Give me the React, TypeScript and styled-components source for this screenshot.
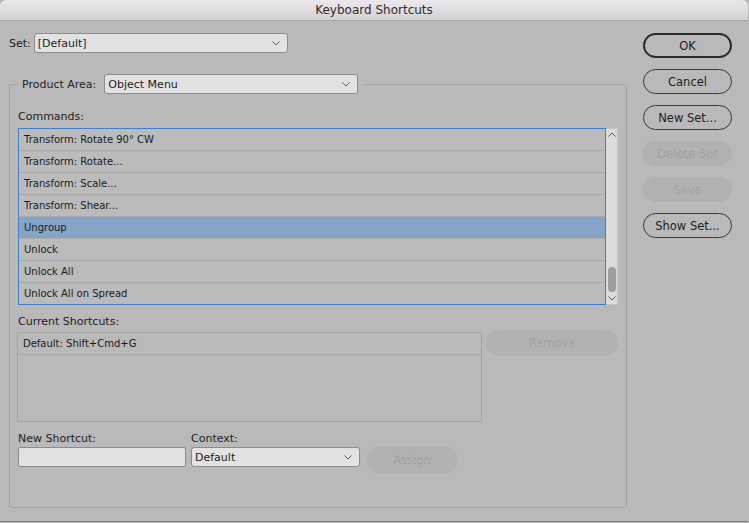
import styled, { createGlobalStyle } from 'styled-components';

const GlobalStyle = createGlobalStyle`
    html, body {
        margin: 0;
        padding: 0;
        background: #b9b9b9;
    }
    body {
        font-family: 'DejaVu Sans', 'Liberation Sans', sans-serif;
        color: #1e1e1e;
    }
`;

const COMMANDS = [
    'Transform: Rotate 90° CW',
    'Transform: Rotate...',
    'Transform: Scale...',
    'Transform: Shear...',
    'Ungroup',
    'Unlock',
    'Unlock All',
    'Unlock All on Spread',
];

const SELECTED = 'Ungroup';

const Chevron = ({ up = false }: { up?: boolean }) => (
    <svg width="8" height="5" viewBox="0 0 8 5">
        <path
            d={up ? 'M0.5 4.5 L4 1 L7.5 4.5' : 'M0.5 0.5 L4 4 L7.5 0.5'}
            fill="none"
            stroke="#5a5a5a"
            strokeWidth="1"
        />
    </svg>
);

const Select = ({ value, width }: { value: string; width: number }) => (
    <SelectBox $width={width}>
        <span>{value}</span>
        <Chevron />
    </SelectBox>
);

const App = () => {
    return (
        <>
            <GlobalStyle />
            <Window>
                <TitleBar>Keyboard Shortcuts</TitleBar>
                <Body>
                    <LeftCol>
                        <SetRow>
                            <Label>Set:</Label>
                            <Select value="[Default]" width={254} />
                        </SetRow>

                        <Group>
                            <Legend>
                                <Label>Product Area:</Label>
                                <Select value="Object Menu" width={254} />
                            </Legend>

                            <SectionLabel $top={16}>Commands:</SectionLabel>
                            <ListWrap>
                                <List>
                                    {COMMANDS.map((c) => (
                                        <Row key={c} $selected={c === SELECTED}>
                                            {c}
                                        </Row>
                                    ))}
                                </List>
                                <Scrollbar>
                                    <Chevron up />
                                    <Thumb />
                                    <Chevron />
                                </Scrollbar>
                            </ListWrap>

                            <SectionLabel $top={10}>Current Shortcuts:</SectionLabel>
                            <ShortcutRow>
                                <ShortcutBox>
                                    <Row>Default: Shift+Cmd+G</Row>
                                </ShortcutBox>
                                <Pill $disabled $width={132}>
                                    Remove
                                </Pill>
                            </ShortcutRow>

                            <AssignRow>
                                <Field>
                                    <SectionLabel $top={0}>New Shortcut:</SectionLabel>
                                    <Input />
                                </Field>
                                <Field>
                                    <SectionLabel $top={0}>Context:</SectionLabel>
                                    <Select value="Default" width={169} />
                                </Field>
                                <AssignSlot>
                                    <Pill $disabled $width={90}>
                                        Assign
                                    </Pill>
                                </AssignSlot>
                            </AssignRow>
                        </Group>
                    </LeftCol>

                    <RightCol>
                        <Pill $default>OK</Pill>
                        <Pill>Cancel</Pill>
                        <Pill>New Set...</Pill>
                        <Pill $disabled>Delete Set</Pill>
                        <Pill $disabled>Save</Pill>
                        <Pill>Show Set...</Pill>
                    </RightCol>
                </Body>
            </Window>
        </>
    );
};

const Window = styled.div`
    width: 748px;
    height: 521px;
    border-bottom: 1px solid #7c7c7c;
    border-top-right-radius: 6px;
    border-top-left-radius: 6px;
    overflow: hidden;
    background: #b9b9b9;
    display: flex;
    flex-direction: column;
`;

const TitleBar = styled.div`
    height: 21px;
    flex-shrink: 0;
    box-sizing: border-box;
    border-bottom: 1px solid #a3a3a3;
    background: linear-gradient(#ebe9eb, #d3d1d3);
    display: flex;
    align-items: center;
    justify-content: center;
    font-size: 12px;
    color: #2e2e2e;
`;

const Body = styled.div`
    display: flex;
    padding: 12px 0 0 9px;
    gap: 16px;
`;

const LeftCol = styled.div`
    width: 618px;
    display: flex;
    flex-direction: column;
`;

const RightCol = styled.div`
    display: flex;
    flex-direction: column;
    gap: 11px;
`;

const SetRow = styled.div`
    display: flex;
    align-items: center;
    gap: 3px;
    height: 20px;
`;

const Label = styled.span`
    font-size: 11px;
    white-space: nowrap;
`;

const SelectBox = styled.div<{ $width: number }>`
    width: ${(p) => p.$width}px;
    height: 20px;
    box-sizing: border-box;
    border: 1px solid #8c8c8c;
    border-radius: 3px;
    background: #e2e2e2;
    display: flex;
    align-items: center;
    justify-content: space-between;
    padding: 0 7px 0 3px;
    font-size: 11px;
    color: #1e1e1e;
`;

const Group = styled.fieldset`
    margin: 21px 0 0;
    padding: 0 8px 8px;
    height: 434px;
    box-sizing: border-box;
    border: 1px solid #a4a4a4;
    border-radius: 3px;
    min-width: 0;
`;

const Legend = styled.legend`
    display: flex;
    align-items: center;
    gap: 8px;
    padding: 0 4px;
    margin-left: 0;
`;

const SectionLabel = styled.div<{ $top: number }>`
    font-size: 11px;
    margin-top: ${(p) => p.$top}px;
    height: 14px;
    line-height: 14px;
    margin-bottom: 4px;
    white-space: nowrap;
`;

const ListWrap = styled.div`
    display: flex;
    height: 177px;
`;

const List = styled.div`
    flex: 1;
    box-sizing: border-box;
    border: 1px solid #3f7fd3;
    overflow: hidden;
    background: #bbbbbb;
`;

const Row = styled.div<{ $selected?: boolean }>`
    height: 22px;
    box-sizing: border-box;
    border-bottom: 1px solid #a9a9a9;
    padding-left: 5px;
    display: flex;
    align-items: center;
    font-size: 10px;
    color: #1a1a1a;
    background: ${(p) => (p.$selected ? '#86a4c8' : 'transparent')};
    white-space: nowrap;
`;

const Scrollbar = styled.div`
    width: 12px;
    box-sizing: border-box;
    background: #dcdcdc;
    border: 1px solid #c4c4c4;
    border-left: none;
    display: flex;
    flex-direction: column;
    align-items: center;
    justify-content: flex-end;
    padding: 0 0 3px;
    gap: 4px;

    & > svg:first-child {
        margin-bottom: auto;
        margin-top: 3px;
    }
`;

const Thumb = styled.div`
    width: 8px;
    height: 25px;
    border-radius: 4px;
    background: #9e9e9e;
`;

const ShortcutRow = styled.div`
    display: flex;
    align-items: flex-start;
    gap: 4px;
    margin-left: -1px;
    margin-top: -3px;
`;

const ShortcutBox = styled.div`
    width: 466px;
    height: 90px;
    margin-top: 2px;
    box-sizing: border-box;
    border: 1px solid #a4a4a4;
`;

const AssignRow = styled.div`
    display: flex;
    align-items: flex-start;
    gap: 5px;
    margin-top: 10px;
`;

const Field = styled.div`
    display: flex;
    flex-direction: column;
    & > div:first-child {
        margin-bottom: 1px;
    }
`;

const AssignSlot = styled.div`
    padding-top: 15px;
    padding-left: 2px;
`;

const Input = styled.div`
    width: 168px;
    height: 20px;
    box-sizing: border-box;
    border: 1px solid #8c8c8c;
    border-radius: 2px;
    background: #e2e2e2;
`;

const Pill = styled.div<{ $default?: boolean; $disabled?: boolean; $width?: number }>`
    width: ${(p) => p.$width ?? 89}px;
    height: ${(p) => (p.$width ? 26 : 25)}px;
    box-sizing: border-box;
    border-radius: 13px;
    display: flex;
    align-items: center;
    justify-content: center;
    font-size: 11.5px;
    flex-shrink: 0;
    border: ${(p) =>
        p.$disabled ? '1px solid transparent' : p.$default ? '2px solid #2b2b2b' : '1px solid #3a3a3a'};
    background: ${(p) => (p.$disabled ? '#b1b1b1' : 'transparent')};
    color: ${(p) => (p.$disabled ? '#a2a2a2' : '#1e1e1e')};
`;

export default App;
